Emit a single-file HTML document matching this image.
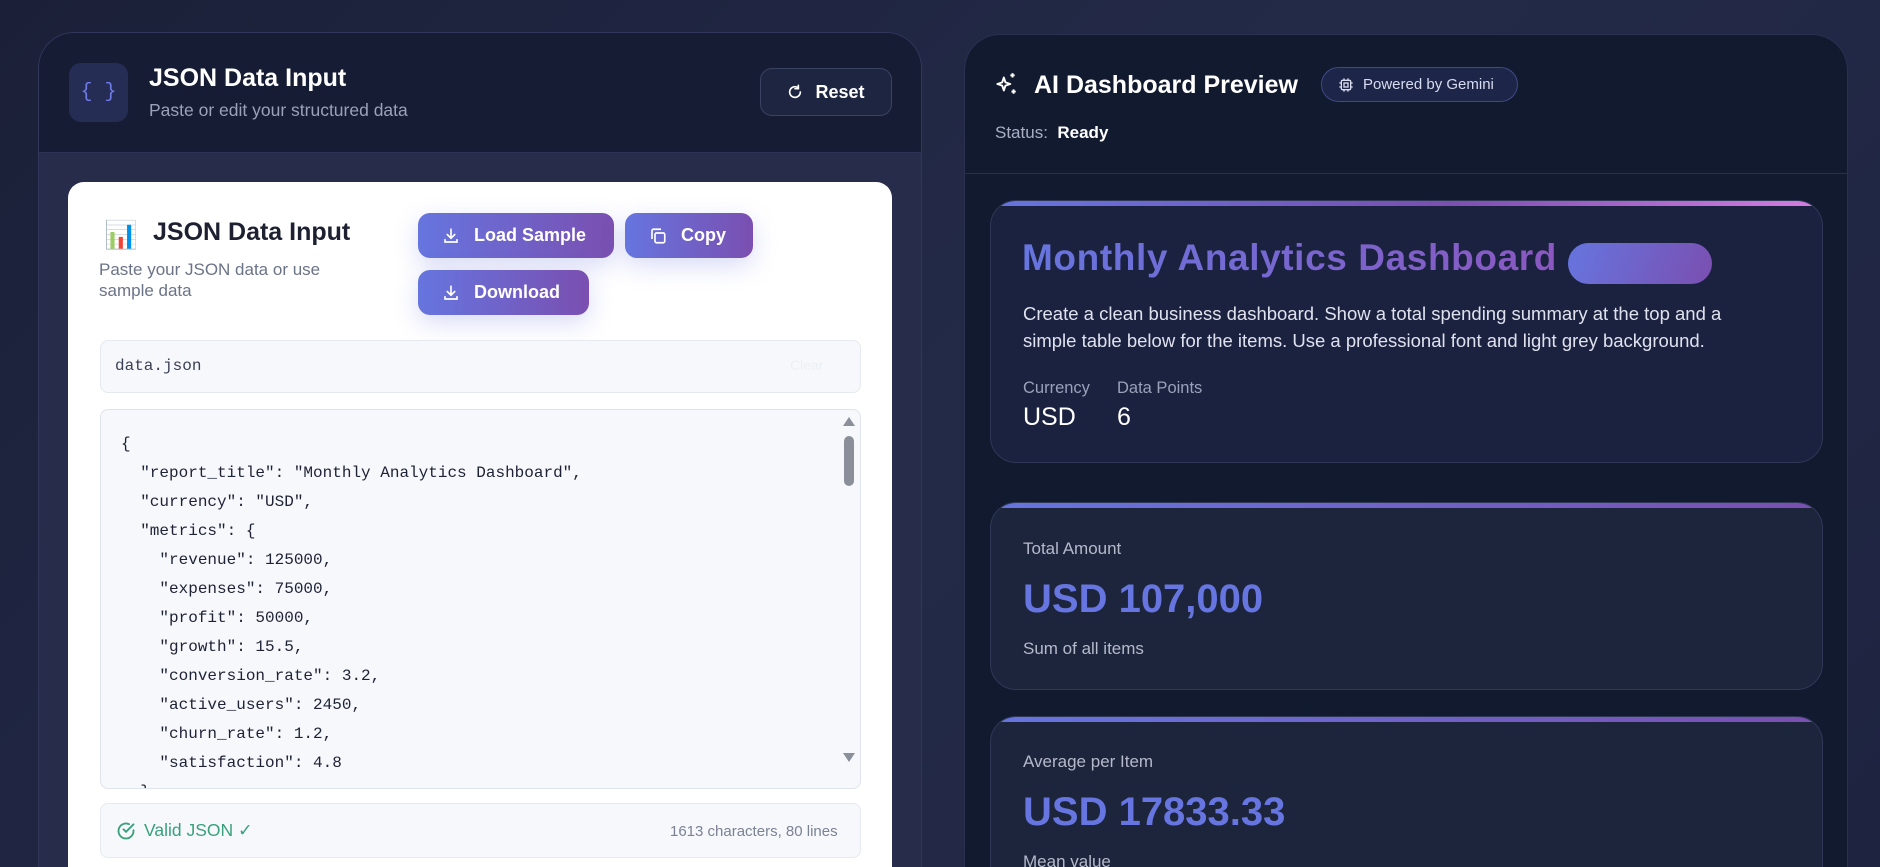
<!DOCTYPE html>
<html style="width:1880px;height:867px;overflow:hidden"><head><meta charset="utf-8"><style>
*{box-sizing:border-box;margin:0;padding:0}
body{width:1880px;height:867px;overflow:hidden;font-family:"Liberation Sans","DejaVu Sans",sans-serif;background:linear-gradient(135deg,#1b2038 0%,#232a48 50%,#1e2440 100%);position:relative}
.a{position:absolute}
.lp{left:38px;top:32px;width:884px;height:835px;border-radius:36px 36px 0 0;background:#262c4a;border:1px solid #30375a;border-bottom:none;overflow:hidden}
.lh{left:0;top:0;width:884px;height:120px;background:#161c33;border-bottom:1px solid #2c3354}
.card{left:68px;top:182px;width:824px;height:685px;background:#fff;border-radius:16px 16px 0 0}
.btn{background:linear-gradient(90deg,#6675df,#7a4fb0);color:#fff;font-weight:bold;font-size:18px;border-radius:12px;display:flex;align-items:center;box-shadow:0 8px 24px rgba(102,117,223,.25)}
.btn svg{margin:0 14px 0 24px}
.code{font-family:"Liberation Mono","DejaVu Sans Mono",monospace;font-size:16px;color:#1e2235;line-height:29px;white-space:pre}
.rp{left:964px;top:34px;width:884px;height:833px;border-radius:36px 36px 0 0;background:#121a30;border:1px solid #2a3150;border-bottom:none;overflow:hidden}
.dc{background:#1d253d;border:1px solid #2e3756;border-radius:26px;overflow:hidden}
.bar{left:0;top:0;height:5px;width:100%}
</style></head><body>
<div class="a lp">
  <div class="a lh"></div>
  <div class="a" style="left:30px;top:30px;width:59px;height:59px;border-radius:12px;background:#262d55;color:#6f7be6;font-size:20px;display:flex;align-items:center;justify-content:center;font-family:'Liberation Mono',monospace">{ }</div>
  <div class="a" style="left:110px;top:31px;color:#fff;font-size:25px;font-weight:bold">JSON Data Input</div>
  <div class="a" style="left:110px;top:67px;color:#9aa1b8;font-size:17.5px">Paste or edit your structured data</div>
  <div class="a" style="left:721px;top:35px;width:132px;height:48px;border:1px solid #3a4262;border-radius:12px;background:#1e2540;color:#fff;font-weight:bold;font-size:18px;display:flex;align-items:center;justify-content:center;gap:12px">
    <svg width="16" height="16" viewBox="0 0 24 24" fill="none" stroke="#fff" stroke-width="2.5" stroke-linecap="round"><path d="M20 12a8 8 0 1 1-3-6.2"/><path d="M17 2v5h-5"/></svg>Reset</div>
</div>
<div class="a card">
  <div class="a" style="left:36px;top:37px;font-size:27px">📊</div>
  <div class="a" style="left:85px;top:36px;font-size:25px;font-weight:bold;color:#1c2030">JSON Data Input</div>
  <div class="a" style="left:31px;top:77px;font-size:17px;color:#6b7388;line-height:21px">Paste your JSON data or use<br>sample data</div>
  <div class="a btn" style="left:350px;top:31px;width:196px;height:45px"><svg width="18" height="18" viewBox="0 0 24 24" fill="none" stroke="#fff" stroke-width="2.2" stroke-linecap="round"><path d="M12 3v12M7 10l5 5 5-5M4 17v3h16v-3"/></svg>Load Sample</div>
  <div class="a btn" style="left:557px;top:31px;width:128px;height:45px"><svg width="18" height="18" viewBox="0 0 24 24" fill="none" stroke="#fff" stroke-width="2.2"><rect x="8" y="8" width="13" height="13" rx="2"/><path d="M4 16V5a2 2 0 0 1 2-2h10"/></svg>Copy</div>
  <div class="a btn" style="left:350px;top:88px;width:171px;height:45px"><svg width="18" height="18" viewBox="0 0 24 24" fill="none" stroke="#fff" stroke-width="2.2" stroke-linecap="round"><path d="M12 3v12M7 10l5 5 5-5M4 17v3h16v-3"/></svg>Download</div>
  <div class="a" style="left:32px;top:158px;width:761px;height:53px;border:1px solid #e6e9f0;border-radius:8px;background:#f7f8fb"></div>
  <div class="a code" style="left:47px;top:170px;color:#3a4055">data.json</div>
  <div class="a" style="left:722px;top:175px;font-size:14px;color:#eceff5">Clear</div>
  <div class="a" style="left:32px;top:227px;width:761px;height:380px;border:1px solid #dfe3ec;border-radius:8px;background:#f7f8fb;overflow:hidden">
    <div class="a code" style="left:20px;top:20px">{
  "report_title": "Monthly Analytics Dashboard",
  "currency": "USD",
  "metrics": {
    "revenue": 125000,
    "expenses": 75000,
    "profit": 50000,
    "growth": 15.5,
    "conversion_rate": 3.2,
    "active_users": 2450,
    "churn_rate": 1.2,
    "satisfaction": 4.8
  },</div>
    <div class="a" style="left:742px;top:7px;width:0;height:0;border-left:6px solid transparent;border-right:6px solid transparent;border-bottom:9px solid #8a8f99"></div>
    <div class="a" style="left:743px;top:26px;width:10px;height:50px;border-radius:5px;background:#8a8f99"></div>
    <div class="a" style="left:742px;top:343px;width:0;height:0;border-left:6px solid transparent;border-right:6px solid transparent;border-top:9px solid #8a8f99"></div>
  </div>
  <div class="a" style="left:32px;top:621px;width:761px;height:55px;border:1px solid #e6e9f0;border-radius:8px;background:#f7f8fb"></div>
  <div class="a" style="left:48px;top:638px;display:flex;align-items:center;gap:8px;color:#3aa07a;font-size:17.5px"><svg width="20" height="20" viewBox="0 0 24 24" fill="none" stroke="#3aa07a" stroke-width="2.2" stroke-linecap="round"><path d="M21 11v1a9 9 0 1 1-5.3-8.2"/><path d="M21 4 12 13l-3-3"/></svg>Valid JSON ✓</div>
  <div class="a" style="left:602px;top:641px;color:#7a8294;font-size:15px">1613 characters, 80 lines</div>
</div>

<div class="a rp">
  <div class="a" style="left:0;top:138px;width:884px;height:1px;background:#283050"></div>
  <svg class="a" style="left:28px;top:36px" width="26" height="26" viewBox="0 0 24 24" fill="none" stroke="#fff" stroke-width="1.8" stroke-linejoin="round"><path d="M10 6l1.5 4.5L16 12l-4.5 1.5L10 18l-1.5-4.5L4 12l4.5-1.5z"/><path d="M18 2v4M16 4h4M19 17v4M17 19h4"/></svg>
  <div class="a" style="left:69px;top:36px;color:#fff;font-size:25px;font-weight:bold">AI Dashboard Preview</div>
  <div class="a" style="left:356px;top:32px;width:197px;height:35px;border:1px solid #3f4a84;border-radius:18px;background:#1d2548;color:#d8dcf0;font-size:15px;display:flex;align-items:center;gap:9px;padding-left:16px"><svg width="16" height="16" viewBox="0 0 24 24" fill="none" stroke="#d8dcf0" stroke-width="2"><rect x="5" y="5" width="14" height="14" rx="2"/><rect x="9" y="9" width="6" height="6"/><path d="M9 2v3M15 2v3M9 19v3M15 19v3M2 9h3M2 15h3M19 9h3M19 15h3"/></svg>Powered by Gemini</div>
  <div class="a" style="left:30px;top:88px;color:#aab0c4;font-size:17px">Status:&nbsp; <b style="color:#fff">Ready</b></div>

  <div class="a dc" style="left:25px;top:165px;width:833px;height:263px;background:#1b2240">
    <div class="a bar" style="background:linear-gradient(90deg,#6675df,#7a4fb0 55%,#d57ee0)"></div>
    <div class="a" style="left:31px;top:36px;font-size:37px;font-weight:900;letter-spacing:0.6px;background:linear-gradient(90deg,#6675df,#8a58c0);-webkit-background-clip:text;color:transparent">Monthly Analytics Dashboard</div>
    <div class="a" style="left:577px;top:42px;width:144px;height:41px;border-radius:21px;background:linear-gradient(110deg,#6675df,#7a4fb0)"></div>
    <div class="a" style="left:32px;top:99px;color:#dfe2ee;font-size:18.5px;line-height:27px">Create a clean business dashboard. Show a total spending summary at the top and a<br>simple table below for the items. Use a professional font and light grey background.</div>
    <div class="a" style="left:32px;top:178px;color:#9aa1b8;font-size:16.5px">Currency</div>
    <div class="a" style="left:126px;top:178px;color:#9aa1b8;font-size:16.5px">Data Points</div>
    <div class="a" style="left:32px;top:202px;color:#fff;font-size:25px">USD</div>
    <div class="a" style="left:126px;top:202px;color:#fff;font-size:25px">6</div>
  </div>

  <div class="a dc" style="left:25px;top:467px;width:833px;height:188px">
    <div class="a bar" style="background:linear-gradient(90deg,#6675df,#7a4fb0)"></div>
    <div class="a" style="left:32px;top:36px;color:#b5bacb;font-size:17px">Total Amount</div>
    <div class="a" style="left:32px;top:74px;color:#6675df;font-size:40px;font-weight:bold">USD 107,000</div>
    <div class="a" style="left:32px;top:136px;color:#b5bacb;font-size:17px">Sum of all items</div>
  </div>
  <div class="a dc" style="left:25px;top:681px;width:833px;height:200px">
    <div class="a bar" style="background:linear-gradient(90deg,#6675df,#7a4fb0)"></div>
    <div class="a" style="left:32px;top:35px;color:#b5bacb;font-size:17px">Average per Item</div>
    <div class="a" style="left:32px;top:73px;color:#6675df;font-size:40px;font-weight:bold">USD 17833.33</div>
    <div class="a" style="left:32px;top:135px;color:#b5bacb;font-size:17px">Mean value</div>
  </div>
</div>
</body></html>
